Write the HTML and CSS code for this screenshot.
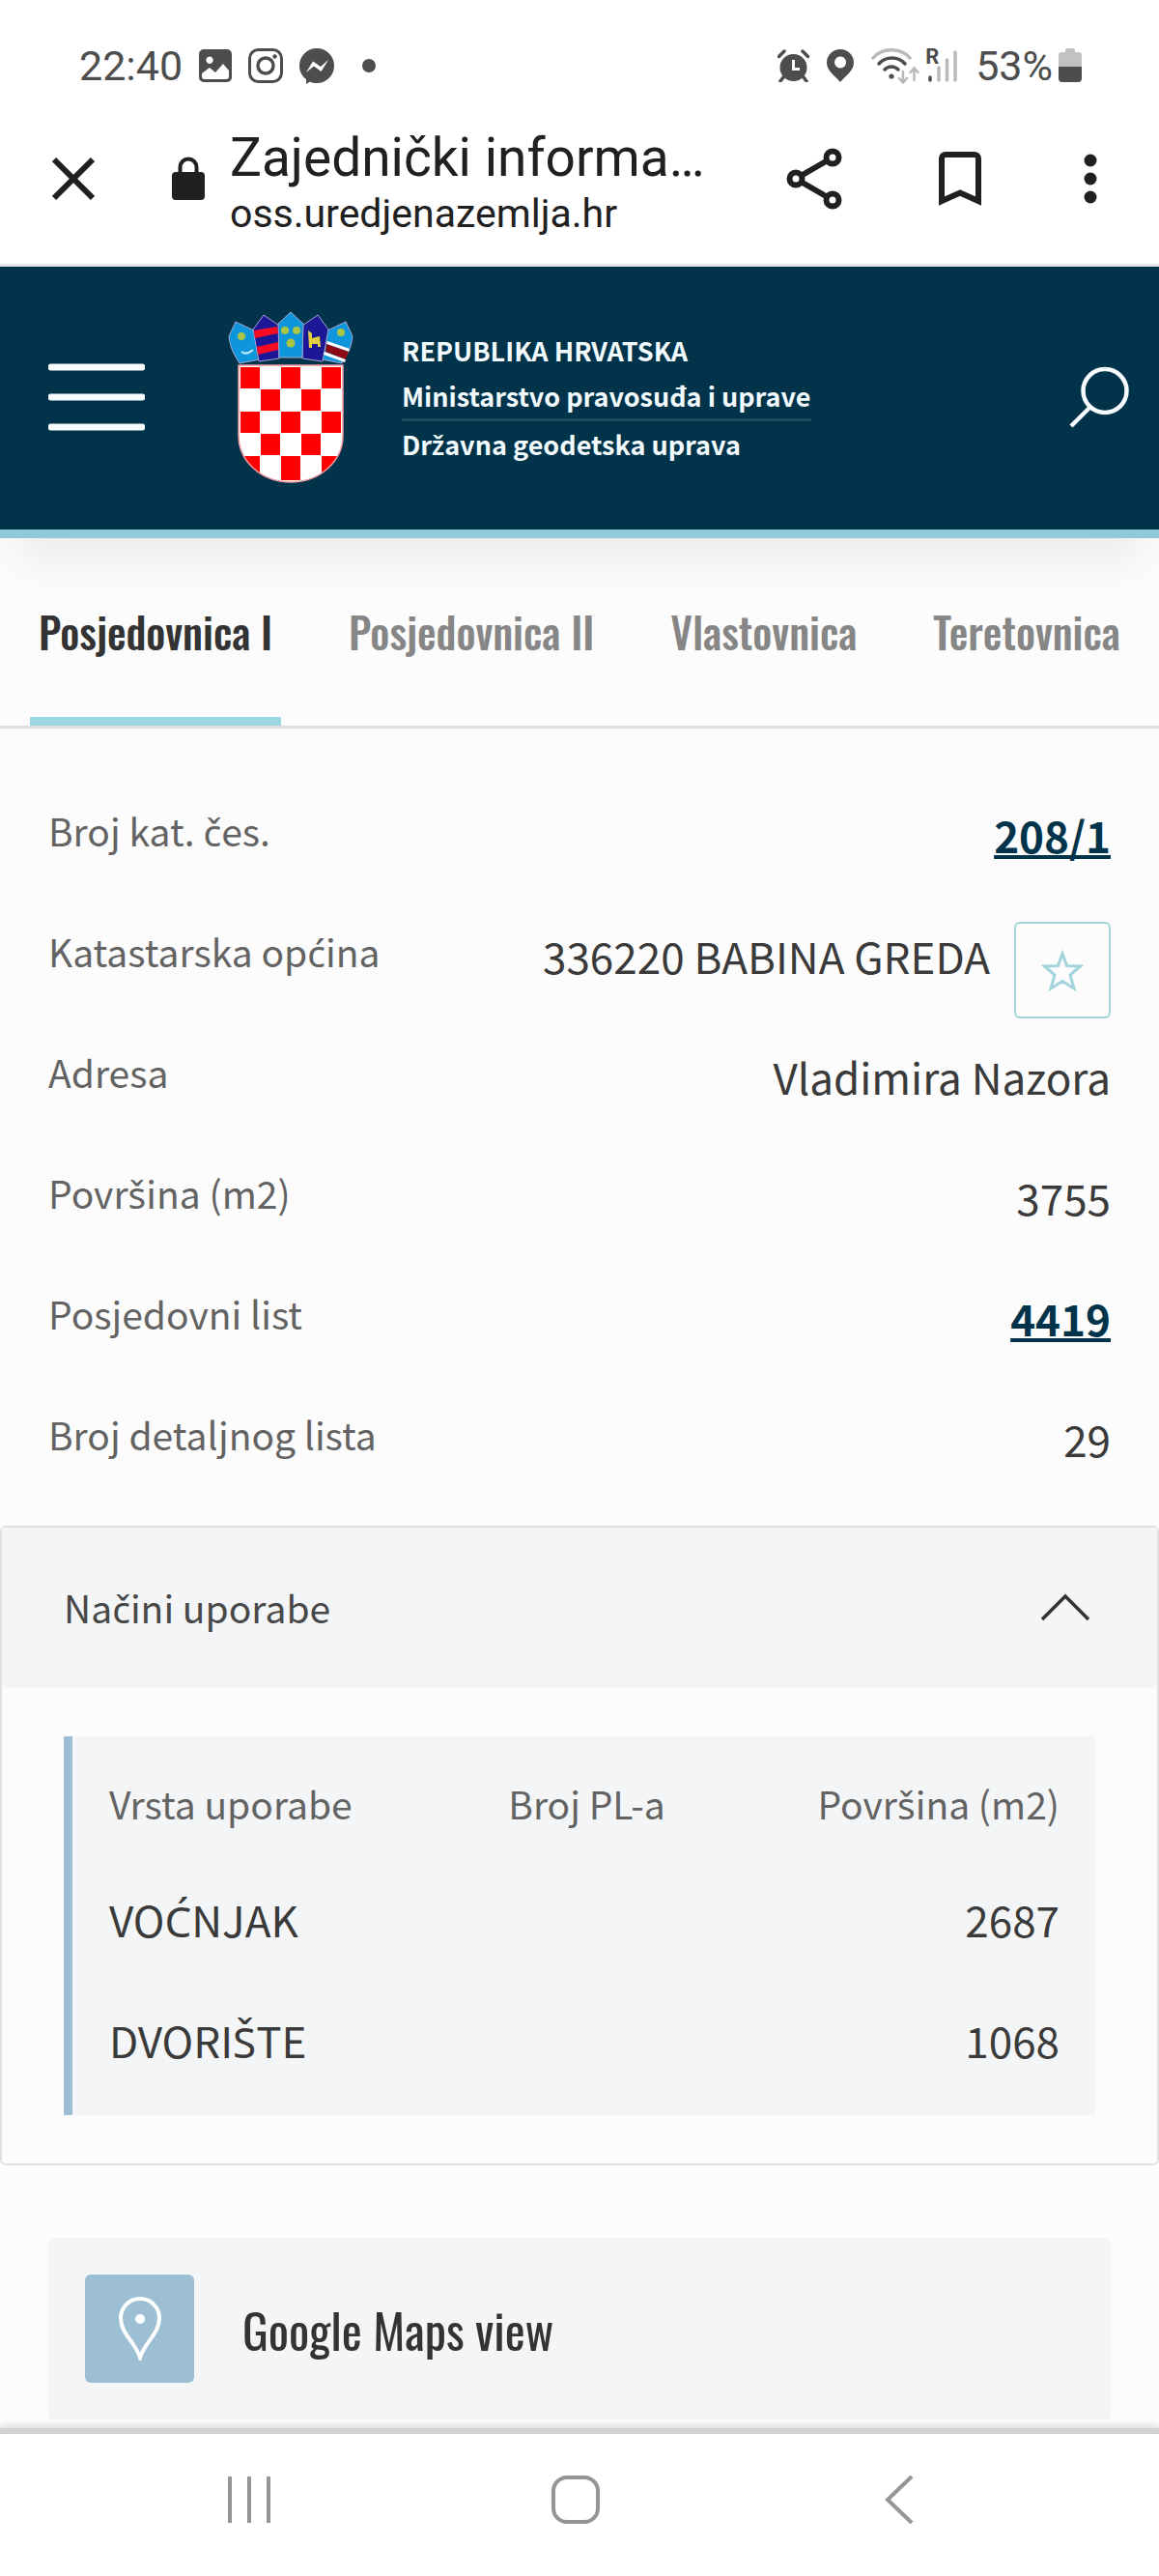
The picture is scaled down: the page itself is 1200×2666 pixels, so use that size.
FILE: index.html
```html
<!DOCTYPE html>
<html lang="hr">
  <head>
    <meta charset="utf-8" />
    <title>Zajednički informacijski sustav</title>
    <meta name="viewport" content="width=device-width" />
    <link rel="stylesheet" href="styles.css">
  </head>
  <body>
    <div class="status-bar">
      <span class="clock">22:40</span>
      <div class="status-icons">
        <svg width="34" height="36" viewBox="0 0 34 36">
          <path fill="#4d4d4d" fill-rule="evenodd" d="M5 1h24a5 5 0 0 1 5 5v24a5 5 0 0 1-5 5H5a5 5 0 0 1-5-5V6a5 5 0 0 1 5-5zM3 26v3a3 3 0 0 0 3 3h22a3 3 0 0 0 3-3v-6l-6-7-8 9-6-5zM11 8.500a3.700 3.700 0 1 0 .1 0z"/>
        </svg>
        <svg width="36" height="36" viewBox="0 0 36 36" fill="none" stroke="#4d4d4d">
          <rect x="1.500" y="1.500" width="33" height="33" rx="9" stroke-width="3"/>
          <circle cx="18" cy="18" r="8" stroke-width="3.500"/>
          <circle cx="27.500" cy="8.500" r="2.200" fill="#4d4d4d" stroke="none"/>
        </svg>
        <svg width="36" height="37" viewBox="0 0 36 37">
          <path fill="#4d4d4d" d="M18 0a18 18 0 0 1 0 36c-3 0-5-.5-7-1.500L7 37v-5C2.500 28.500 0 24 0 18A18 18 0 0 1 18 0z"/>
          <path fill="#fff" d="M7 25l7-11.500 8 5.500 8-7-7.500 12-7.500-5.500z"/>
        </svg>
        <span class="dot"></span>
      </div>
      <div class="status-right">
        <svg width="33" height="34" viewBox="0 0 33 34">
          <circle cx="16.500" cy="19" r="14" fill="#4d4d4d"/>
          <path d="M1.500 7.500L7 2M31.500 7.500L26 2M6 29l-3 4M27 29l3 4" stroke="#4d4d4d" stroke-width="3.500" stroke-linecap="round"/>
          <path d="M16.500 11v9.500h6.500" fill="none" stroke="#fff" stroke-width="3"/>
        </svg>
        <svg width="28" height="34" viewBox="0 0 28 34">
          <path fill="#4d4d4d" fill-rule="evenodd" d="M14 0a14 14 0 0 1 14 14c0 8-8 13-14 20C8 27 0 22 0 14A14 14 0 0 1 14 0zm0 7.500a6 6 0 1 0 .1 0z"/>
        </svg>
        <svg class="wifi" width="50" height="38" viewBox="0 0 50 38" fill="none" stroke-linecap="round">
          <path d="M2 11C11 0 31 0 40 11" stroke="#b9b9b9" stroke-width="3.500"/>
          <path d="M8 17C15 9 28 9 35 17" stroke="#4d4d4d" stroke-width="3.500"/>
          <path d="M14 23C18 19 24 19 28 23" stroke="#4d4d4d" stroke-width="3.500"/>
          <circle cx="21" cy="30" r="2.600" fill="#4d4d4d"/>
          <path d="M33 25v11M29 32l4 4.500 4-4.500M44.500 34V22M40.500 26l4-4.500 4 4.500" stroke="#b9b9b9" stroke-width="2.500"/>
        </svg>
        <div class="signal">
          <span class="roaming">R</span>
          <svg width="34" height="36" viewBox="0 0 34 36" fill="none" stroke-width="3.500" stroke-linecap="round">
            <path d="M5 30v3" stroke="#4d4d4d"/>
            <path d="M14 20v13M22.500 12v21M31 4v29" stroke="#b9b9b9"/>
          </svg>
        </div>
        <span class="battery-level">53%</span>
        <svg width="24" height="37" viewBox="0 0 24 37">
          <path fill="#c2c2c2" d="M7 2a2 2 0 0 1 2-2h6a2 2 0 0 1 2 2v2h4a3 3 0 0 1 3 3v13H0V7a3 3 0 0 1 3-3h4z"/>
          <path fill="#4d4d4d" d="M0 19h24v12a4 4 0 0 1-4 4H4a4 4 0 0 1-4-4z"/>
        </svg>
      </div>
    </div>

    <div class="toolbar">
      <button class="icon-button" aria-label="Zatvori">
        <svg width="44" height="46" viewBox="0 0 44 46"><path d="M2 3l40 40M42 3L2 43" stroke="#202020" stroke-width="6"/></svg>
      </button>
      <svg class="lock" width="34" height="46" viewBox="0 0 34 46">
        <rect x="0" y="16" width="34" height="29" rx="4" fill="#202020"/>
        <path d="M8.500 18v-7a8.500 8.500 0 0 1 17 0v7" fill="none" stroke="#202020" stroke-width="4"/>
      </svg>
      <div class="page-info">
        <div class="page-title">Zajednički informa…</div>
        <div class="page-url">oss.uredjenazemlja.hr</div>
      </div>
      <div class="toolbar-actions">
        <button class="icon-button" aria-label="Dijeli">
          <svg width="58" height="64" viewBox="0 0 58 64" fill="none" stroke="#202020" stroke-width="6">
            <path d="M48 10L10 32l38 22"/>
            <g fill="#fff">
              <circle cx="48" cy="10" r="6.500"/>
              <circle cx="10" cy="32" r="6.500"/>
              <circle cx="48" cy="54" r="6.500"/>
            </g>
          </svg>
        </button>
        <button class="icon-button" aria-label="Spremi oznaku">
          <svg width="46" height="58" viewBox="0 0 46 58"><path d="M4 52V8a4 4 0 0 1 4-4h30a4 4 0 0 1 4 4v44l-19-8.500z" fill="none" stroke="#202020" stroke-width="6"/></svg>
        </button>
        <button class="icon-button" aria-label="Više">
          <svg width="26" height="52" viewBox="0 0 26 52" fill="#202020">
            <circle cx="13" cy="7" r="6.500"/><circle cx="13" cy="26" r="6.500"/><circle cx="13" cy="45" r="6.500"/>
          </svg>
        </button>
      </div>
    </div>

    <header class="header">
      <button class="icon-button" aria-label="Izbornik">
        <svg width="100" height="72" viewBox="0 0 100 72"><path d="M3 5h94M3 36h94M3 67h94" stroke="#fafdff" stroke-width="7" stroke-linecap="round"/></svg>
      </button>
      <svg class="coat" width="130" height="178" viewBox="0 0 130 178">
        <defs>
          <clipPath id="shield"><path d="M11 56h108v73a54 48 0 0 1-108 0z"/></clipPath>
        </defs>
        <!-- crown -->
        <g stroke="#a9a3cf" stroke-width="1">
          <path fill="#0d96dc" d="M8 11l19 9 6 30-21 4C7 46 2 38 1 26z"/>
          <path fill="#0d96dc" d="M122 11l7 15c-1 12-6 20-11 28l-21-4 6-30z"/>
          <path fill="#1b1796" d="M37 4l16 11v34l-21 3-6-33z"/>
          <path fill="#1b1796" d="M93 4l11 15-6 33-21-3V15z"/>
          <path fill="#0d96dc" d="M65 1l13 12-1 35H53l-1-35z"/>
        </g>
        <path fill="#fb0a23" d="M27 20l24-4 1 7-24 5zM30 37l22-5v8l-21 5z"/>
        <path fill="#fff" d="M103 31l23 8-1 3-23-8zM100 42l22 8-1 3-22-8z"/>
        <path fill="#8c0a16" d="M102 34l23 8-3 8-21-8z"/>
        <g fill="#a9c545">
          <circle cx="14" cy="26" r="4"/>
          <circle cx="59" cy="20" r="4"/><circle cx="71" cy="20" r="4"/><circle cx="65" cy="33" r="4.500"/>
          <circle cx="117" cy="22" r="4"/>
        </g>
        <path fill="#e3d040" d="M83 20l4 3v5l8-2 1 11h-3v-3h-6v4h-3z"/>
        <path d="M14 42q5 4 12-2" fill="none" stroke="#bfe6f5" stroke-width="2"/>
        <!-- checkerboard -->
        <g clip-path="url(#shield)">
          <path fill="#fff" d="M11 56h108v122H11z"/>
          <path fill="#fe0000" d="M13 58h20v22H13zM55 58h20v22H55zM97 58h20v22H97zM34 81h20v22H34zM76 81h20v22H76zM13 104h20v22H13zM55 104h20v22H55zM97 104h20v22H97zM34 127h20v22H34zM76 127h20v22H76zM13 150h20v22H13zM55 150h20v25H55zM97 150h20v22H97z"/>
        </g>
        <path d="M11 56h108v73a54 48 0 0 1-108 0z" fill="none" stroke="#ef9aa0" stroke-width="1.500"/>
      </svg>
      <div class="ministry">
        <span>REPUBLIKA HRVATSKA</span>
        <span class="ministry-name">Ministarstvo pravosuđa i uprave</span>
        <span>Dr<i>ž</i>avna geodetska uprava</span>
      </div>
      <button class="icon-button search" aria-label="Traži">
        <svg width="64" height="64" viewBox="0 0 64 64" fill="none" stroke="#fafdff" stroke-width="4.500"><circle cx="38" cy="25.500" r="22.500"/><path d="M23 42L3 62"/></svg>
      </button>
    </header>

    <nav class="tabs">
      <a href="#posjedovnica-1" class="tab active">Posjedovnica I</a>
      <a href="#posjedovnica-2" class="tab">Posjedovnica II</a>
      <a href="#vlastovnica" class="tab">Vlastovnica</a>
      <a href="#teretovnica" class="tab">Teretovnica</a>
    </nav>

    <main class="content">
      <dl class="details">
        <div class="detail">
          <dt>Broj kat. <i>č</i>es.</dt>
          <dd><a href="#cestica">208/1</a></dd>
        </div>
        <div class="detail">
          <dt>Katastarska op<i>ć</i>ina</dt>
          <dd>336220 BABINA GREDA</dd>
          <dd>
            <button class="favorite" aria-label="Dodaj u favorite">
              <svg width="44" height="44" viewBox="0 0 44 44"><path d="M22 5l4.500 12.500 14 .5-10.500 9 4 14-12-7.500L10 41l4-14L3.500 18l14-.5z" fill="none" stroke="#a3d3dd" stroke-width="3"/></svg>
            </button>
          </dd>
        </div>
        <div class="detail">
          <dt>Adresa</dt>
          <dd>Vladimira Nazora</dd>
        </div>
        <div class="detail">
          <dt>Povr<i>š</i>ina (m2)</dt>
          <dd>3755</dd>
        </div>
        <div class="detail">
          <dt>Posjedovni list</dt>
          <dd><a href="#posjedovni-list">4419</a></dd>
        </div>
        <div class="detail">
          <dt>Broj detaljnog lista</dt>
          <dd>29</dd>
        </div>
      </dl>

      <section class="accordion">
        <button class="accordion-header" aria-expanded="true">
          <span>Na<i>č</i>ini uporabe</span>
          <svg width="52" height="30" viewBox="0 0 52 30"><path d="M2 28L26 4l24 24" fill="none" stroke="#333" stroke-width="3.500"/></svg>
        </button>
        <div class="usage">
          <table>
            <thead>
              <tr><th>Vrsta uporabe</th><th>Broj PL-a</th><th>Povr<i>š</i>ina (m2)</th></tr>
            </thead>
            <tbody>
              <tr><td>VO<i>Ć</i>NJAK</td><td></td><td>2687</td></tr>
              <tr><td>DVORI<i>Š</i>TE</td><td></td><td>1068</td></tr>
            </tbody>
          </table>
        </div>
      </section>

      <a href="#karta" class="map-link">
        <span class="map-icon">
          <svg width="46" height="66" viewBox="0 0 46 66"><path d="M23 63C18 47 3 38 3 22a20 20 0 0 1 40 0c0 16-15 25-20 41z" fill="none" stroke="#fff" stroke-width="4"/><circle cx="23" cy="23" r="5" fill="#fff"/></svg>
        </span>
        Google Maps view
      </a>
    </main>

    <div class="system-nav">
      <button class="icon-button" aria-label="Nedavno">
        <svg width="46" height="50" viewBox="0 0 46 50"><path d="M3 1v48M23 1v48M43 1v48" stroke="#959595" stroke-width="4"/></svg>
      </button>
      <button class="icon-button" aria-label="Početna">
        <svg width="50" height="50" viewBox="0 0 50 50"><rect x="2" y="2" width="46" height="46" rx="14" fill="none" stroke="#959595" stroke-width="4"/></svg>
      </button>
      <button class="icon-button" aria-label="Natrag">
        <svg width="36" height="50" viewBox="0 0 36 50"><path d="M34 1L9 25l25 24" fill="none" stroke="#959595" stroke-width="4"/></svg>
      </button>
    </div>
  </body>
</html>
```
FILE: styles.css
```css
* {
    box-sizing: border-box;
}
body {
    margin: 0;
    min-height: 100vh;
    display: flex;
    flex-direction: column;
    font-family: "Noto Sans CJK SC", "Open Sans", sans-serif;
    background: #fcfcfc;
    color: #3a3a3a;
    white-space: nowrap;
}
svg {
    display: block;
    flex: none;
}
button {
    font: inherit;
    color: inherit;
    border: 0;
    background: none;
    padding: 0;
}
/* letters with a caron or acute that the body font lacks */
i {
    font-family: "Noto Sans", sans-serif;
    font-style: normal;
    line-height: 1;
}
.icon-button {
    display: block;
    flex: none;
}

/* phone status bar */
.status-bar {
    display: flex;
    align-items: center;
    height: 136px;
    padding: 0 80px 0 82px;
    background: #fff;
    color: #4d4d4d;
    font: 43px Roboto, sans-serif;
}
.status-icons {
    display: flex;
    align-items: center;
    gap: 17px;
    margin-left: 17px;
}
.dot {
    width: 14px;
    height: 14px;
    margin-left: 12px;
    border-radius: 50%;
    background: #4d4d4d;
}
.status-right {
    display: flex;
    align-items: center;
    margin-left: auto;
    gap: 18px;
}
.wifi {
    margin-right: -12px;
}
.signal {
    position: relative;
}
.roaming {
    position: absolute;
    top: 0;
    left: 0;
    font-size: 22px;
    line-height: 18px;
    font-weight: bold;
}
.battery-level {
    margin-right: -12px;
}

.toolbar {
    display: flex;
    align-items: center;
    height: 140px;
    padding: 0 58px 40px 54px;
    background: #fff;
    border-bottom: 3px solid #e3e7ea;
    color: #202020;
    font-family: Roboto, sans-serif;
}
.lock {
    margin-left: 80px;
}
.page-info {
    padding-top: 10px;
    margin-left: 26px;
}
.page-title {
    font-size: 55px;
    line-height: 62px;
}
.page-url {
    font-size: 41px;
    line-height: 54px;
}
.toolbar-actions {
    display: flex;
    align-items: center;
    margin-left: auto;
    gap: 99px;
}

.header {
    display: flex;
    align-items: center;
    height: 281px;
    padding: 0 30px 2px 50px;
    background: #01344b;
    border-bottom: 9px solid #90c9d9;
    box-shadow: 0 40px 50px -20px rgba(0, 0, 0, 0.08);
}
.coat {
    margin-left: 86px;
}
.ministry {
    display: flex;
    flex-direction: column;
    margin-left: 50px;
    color: #f3fbff;
    font-size: 27px;
    font-weight: 600;
    line-height: 47px;
}
.ministry-name {
    border-bottom: 3px solid #1d4b60;
}
.search {
    margin-left: auto;
}

.tabs {
    display: flex;
    justify-content: space-between;
    padding: 0 31px;
    border-bottom: 3px solid #e0e0e0;
}
.tab {
    padding: 68px 9px 60px;
    border-bottom: 9px solid transparent;
    color: #868686;
    font-family: Oswald, "Liberation Sans Narrow", sans-serif;
    font-size: 44px;
    font-weight: 500;
    line-height: 57px;
    text-decoration: none;
}
.active {
    color: #333;
    border-color: #9ad7e3;
}

.details {
    margin: 0;
    padding: 75px 50px 0;
}
.detail {
    display: flex;
    align-items: flex-start;
    min-height: 100px;
    margin-bottom: 25px;
}
dt {
    flex: 1;
    color: #636363;
    font-size: 39px;
    line-height: 60px;
}
dd {
    margin: 0 0 0 25px;
    font-size: 44px;
    line-height: 70px;
}
dd a {
    color: #01344b;
    font-weight: 600;
    text-decoration-thickness: 4px;
}
.favorite {
    display: flex;
    align-items: center;
    justify-content: center;
    width: 100px;
    height: 100px;
    border: 2px solid #a3d3dd;
    border-radius: 6px;
}

.accordion {
    border: 2px solid #e0e1e3;
    border-radius: 6px;
}
.accordion-header {
    display: flex;
    align-items: center;
    justify-content: space-between;
    width: 100%;
    height: 166px;
    padding: 0 69px 2px 64px;
    background: #f4f5f7;
    color: #484848;
    font-size: 39px;
    line-height: 60px;
}
.usage {
    margin: 50px 64px;
    padding: 40px 37px 44px 38px;
    background: #f4f5f7;
    border-left: 9px solid #9dbfd3;
}
table {
    width: 100%;
    table-layout: fixed;
    border-collapse: collapse;
}
th {
    padding: 0;
    color: #636363;
    font-size: 39px;
    font-weight: normal;
    line-height: 58px;
    text-align: left;
}
th:first-child {
    width: 42%;
}
th:nth-child(2) {
    width: 20%;
}
th:last-child,
td:last-child {
    text-align: right;
}
td {
    padding: 57px 0 0;
    font-size: 44px;
    line-height: 68px;
}

.map-link {
    display: flex;
    align-items: center;
    gap: 50px;
    margin: 75px 50px 0;
    padding: 38px;
    background: #f4f5f7;
    border-radius: 6px;
    color: #333;
    font-family: Oswald, "Liberation Sans Narrow", sans-serif;
    font-size: 50px;
    line-height: 60px;
    text-decoration: none;
}
.map-icon {
    display: flex;
    align-items: center;
    justify-content: center;
    width: 113px;
    height: 112px;
    border-radius: 6px;
    background: #9dbfd3;
}

.system-nav {
    display: flex;
    align-items: flex-start;
    justify-content: space-between;
    height: 153px;
    margin-top: auto;
    padding: 43px 254px 0 235px;
    background: #fff;
    border-top: 6px solid #d2d2d2;
    box-shadow: 0 -2px 8px rgba(0, 0, 0, 0.16);
}
```
